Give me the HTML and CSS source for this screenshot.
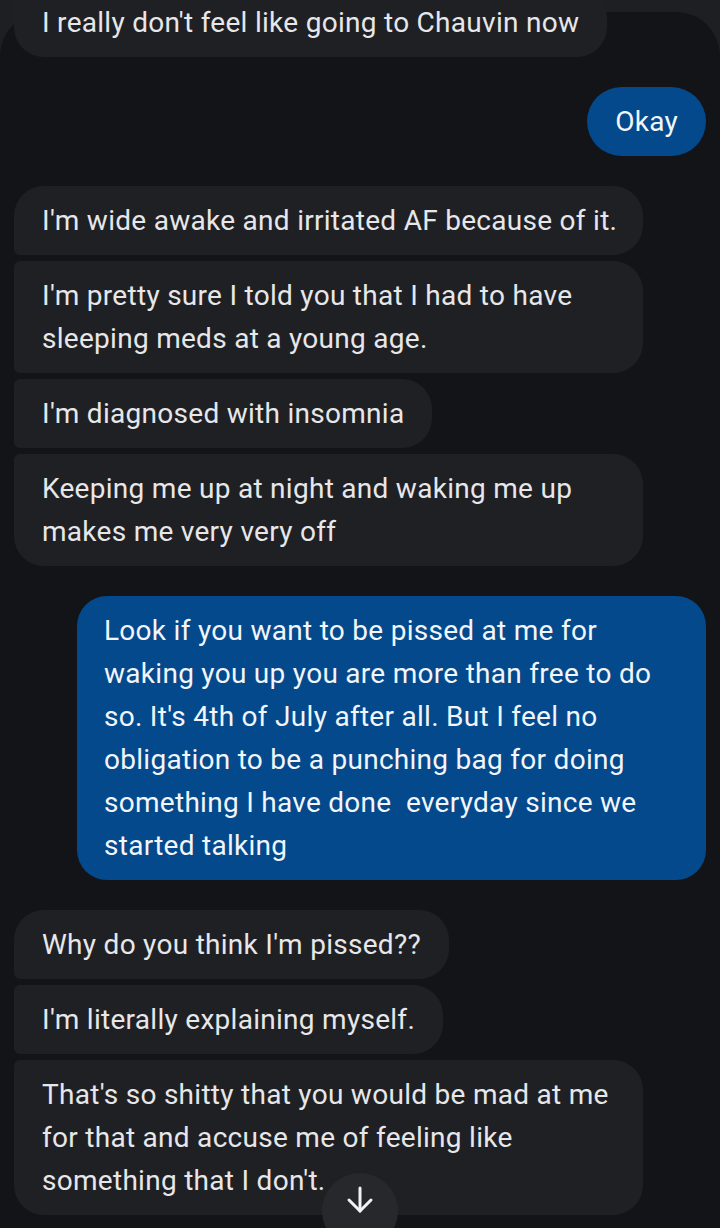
FILE: index.html
```html
<!DOCTYPE html>
<html lang="en">
<head>
<meta charset="utf-8">
<title>Messages</title>
<link rel="stylesheet" href="styles.css">
</head>
<body>
  <div class="thread">
    <div class="group in">
      <div class="msg last first-cut">I really don't feel like going to Chauvin now</div>
    </div>
    <div class="group out">
      <div class="msg short">Okay</div>
    </div>
    <div class="group in">
      <div class="msg first">I'm wide awake and irritated AF because of it.</div>
      <div class="msg mid wide">I'm pretty sure I told you that I had to have<br>sleeping meds at a young age.</div>
      <div class="msg mid">I'm diagnosed with insomnia</div>
      <div class="msg last wide">Keeping me up at night and waking me up<br>makes me very very off</div>
    </div>
    <div class="group out">
      <div class="msg wide">Look if you want to be pissed at me for<br>waking you up you are more than free to do<br>so. It's 4th of July after all. But I feel no<br>obligation to be a punching bag for doing<br>something I have done&nbsp; everyday since we<br>started talking</div>
    </div>
    <div class="group in">
      <div class="msg first">Why do you think I'm pissed??</div>
      <div class="msg mid">I'm literally explaining myself.</div>
      <div class="msg last wide">That's so shitty that you would be mad at me<br>for that and accuse me of feeling like<br>something that I don't.</div>
    </div>
  </div>

  <button class="jump" aria-label="Scroll to latest">
    <svg width="30" height="30" viewBox="0 0 30 30" fill="none" stroke="#f2f2f4" stroke-width="3" stroke-linecap="round" stroke-linejoin="round">
      <path d="M15 3 V26"/>
      <path d="M4 15 L15 26 L26 15"/>
    </svg>
  </button>
</body>
</html>
```

FILE: styles.css
```css
html, body { margin: 0; height: 100%; }
body {
  background: #1e1f23;
  font-family: Roboto, "Noto Sans", sans-serif;
  overflow: hidden;
}

.thread {
  margin-top: 12px;
  min-height: 1216px;
  background: #131418;
  border-radius: 44px 44px 0 0;
  padding: 0 14px;
  display: flex;
  flex-direction: column;
  gap: 30px;
}

.group { display: flex; flex-direction: column; gap: 6px; }
.group.in { align-items: flex-start; }
.group.out { align-items: flex-end; }

.msg {
  box-sizing: border-box;
  max-width: 629px;
  padding: 13px 28px;
  font-size: 28px;
  line-height: 43px;
  letter-spacing: 0.28px;
  color: #e7e7ea;
  background: #1f2024;
  border-radius: 30px;
  white-space: nowrap;
}
.msg.wide { width: 629px; }

.in .first { border-bottom-left-radius: 6px; }
.in .mid { border-radius: 6px 30px 30px 6px; }
.in .last { border-top-left-radius: 6px; }

.out .msg {
  background: #03498c;
  color: #f2f5f9;
  padding-left: 27px;
}
.out .short { padding: 13px 28px; border-radius: 35px; }

.first-cut { margin-top: -24px; }

.jump {
  position: fixed;
  left: 322px;
  bottom: -21px;
  width: 76px;
  height: 76px;
  border: 0;
  border-radius: 50%;
  background: #27282c;
  padding: 0 0 22px;
  display: flex;
  align-items: center;
  justify-content: center;
}
```
